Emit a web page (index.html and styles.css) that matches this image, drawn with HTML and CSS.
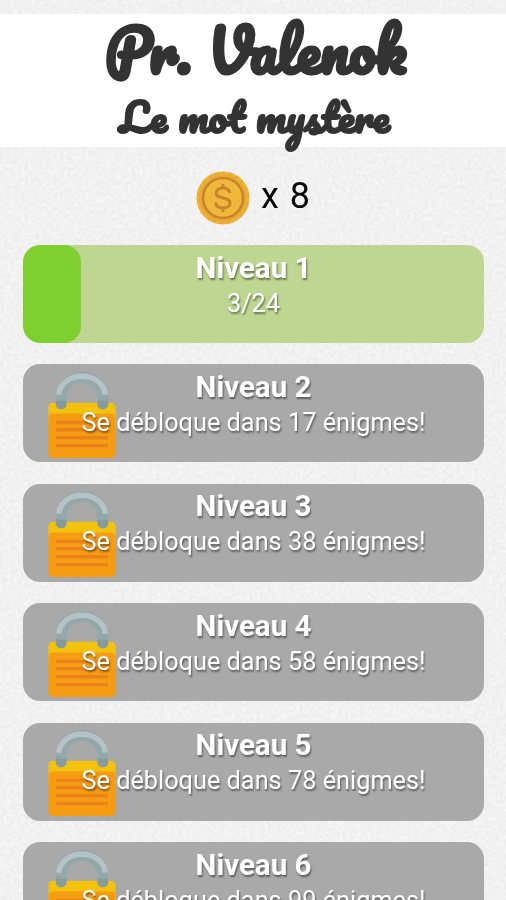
FILE: index.html
```html
<!DOCTYPE html>
<html lang="fr">
<head>
<meta charset="utf-8">
<meta name="viewport" content="width=device-width, initial-scale=1">
<title>Pr. Valenok</title>
<link rel="stylesheet" href="styles.css">
</head>
<body>
<svg class="paper" aria-hidden="true">
  <filter id="grain" x="0" y="0" width="100%" height="100%" color-interpolation-filters="sRGB">
    <feTurbulence type="fractalNoise" baseFrequency=".28" numOctaves="3" seed="4"/>
    <feColorMatrix values=".07 0 0 0 .911  .07 0 0 0 .911  .07 0 0 0 .911  0 0 0 0 1"/>
  </filter>
  <rect width="100%" height="100%" filter="url(#grain)"/>
</svg>
<svg class="symbols" aria-hidden="true">
  <symbol id="lock" viewBox="0 0 68 87">
    <path d="M13 33V27C13 -2 55 -2 55 27V33" fill="none" stroke="#93a8a9" stroke-width="11"/>
    <path d="M10.500 23C13-2 55-2 57.500 23" fill="none" stroke="#b5c3c7" stroke-width="5.500"/>
    <path d="M5 31H63Q68 31 68 36V54H0V36Q0 31 5 31Z" fill="#f2c20c"/>
    <path d="M0 47Q0 42 5 42H63Q68 42 68 47V82Q68 87 63 87H5Q0 87 0 82Z" fill="#f59c12"/>
    <path d="M7.500 29V33A5.500 5 0 0 0 18.500 33V29ZM49.500 29V33A5.500 5 0 0 0 60.500 33V29Z" fill="#879b9c"/>
    <path d="M8 51H60M8 58.500H60M8 66.500H60M8 74.500H60" stroke="#e98219" stroke-width="3.500"/>
  </symbol>
</svg>
<main class="screen">
  <header class="banner">
    <svg class="logo" viewBox="0 0 506 133" role="img" aria-label="Pr. Valenok, Le mot mystère">
      <text class="logo-title" x="105" y="59.500" textLength="301" lengthAdjust="spacingAndGlyphs">Pr. Valenok</text>
      <text class="logo-subtitle" x="119.500" y="118.500" textLength="270" lengthAdjust="spacingAndGlyphs">Le mot mystère</text>
    </svg>
  </header>
  <div class="coins">
    <svg class="coin" viewBox="0 0 54 54">
      <circle cx="27" cy="27" r="26.500" fill="#e8ab32"/>
      <circle cx="27" cy="27" r="25" fill="none" stroke="#f0b63a" stroke-width="2" stroke-dasharray="4 3"/>
      <circle cx="27" cy="27" r="20" fill="#efb83c" stroke="#c9842a" stroke-width="2.500"/>
      <path d="M34 22C33 18 30 17 27 17C23 17 20 19 20 22C20 29 34 25 34 32C34 35 31 37 27 37C23 37 20 35 19.500 31.500M27 13V17M27 37V41" fill="none" stroke="#c9842a" stroke-width="3"/>
    </svg>
    <span class="coin-count">x 8</span>
  </div>
  <section class="levels">
    <article class="level open"><div class="progress"></div><h2>Niveau 1</h2><p>3/24</p></article>
    <article class="level"><svg class="lock"><use href="#lock"/></svg><h2>Niveau 2</h2><p>Se débloque dans 17 énigmes!</p></article>
    <article class="level"><svg class="lock"><use href="#lock"/></svg><h2>Niveau 3</h2><p>Se débloque dans 38 énigmes!</p></article>
    <article class="level"><svg class="lock"><use href="#lock"/></svg><h2>Niveau 4</h2><p>Se débloque dans 58 énigmes!</p></article>
    <article class="level"><svg class="lock"><use href="#lock"/></svg><h2>Niveau 5</h2><p>Se débloque dans 78 énigmes!</p></article>
    <article class="level"><svg class="lock"><use href="#lock"/></svg><h2>Niveau 6</h2><p>Se débloque dans 99 énigmes!</p></article>
  </section>
</main>
</body>
</html>
```
FILE: styles.css
```css
* { box-sizing: border-box; }
body {
  margin: 0;
  background: #f1f1f1;
  font-family: Roboto, "Liberation Sans", sans-serif;
}
.paper {
  position: fixed;
  inset: 0;
  width: 100%;
  height: 100%;
  z-index: -1;
}
.symbols { position: absolute; width: 0; height: 0; }
.screen {
  height: 900px;
  padding-top: 14px;
  overflow: hidden;
}
.banner { height: 133px; background: #fff; }
.logo { display: block; width: 506px; height: 133px; overflow: visible; }
.logo text {
  font-family: Pacifico, Lato, sans-serif;
  font-weight: 400;
  fill: #333;
  stroke: #333;
  stroke-linejoin: round;
}
.logo-title { font-size: 58px; stroke-width: 3px; }
.logo-subtitle { font-size: 38.500px; stroke-width: 2px; }
.coins {
  display: flex;
  align-items: center;
  justify-content: center;
  gap: 11px;
  height: 98px;
  padding: 4px 0 0 1px;
}
.coin { width: 54px; height: 54px; }
.coin-count {
  font-size: 36px;
  line-height: 40px;
  letter-spacing: 1px;
  color: #080808;
  margin-top: -4px;
}
.levels {
  display: flex;
  flex-direction: column;
  gap: 21.450px;
  padding: 0 22px 0 23px;
}
.level {
  position: relative;
  flex: none;
  height: 98px;
  padding-top: 4.600px;
  border-radius: 17px;
  background: #a9a9a9;
  color: #fff;
  text-align: center;
  text-shadow: 1px 2px 2px rgba(0, 0, 0, .45);
  overflow: hidden;
}
.level.open { background: #bed692; }
.progress {
  position: absolute;
  inset: 0 auto 0 0;
  width: 12.500%;
  border-radius: 17px;
  background: #80cf30;
}
.lock {
  position: absolute;
  left: 25px;
  top: 7.500px;
  width: 68px;
  height: 86px;
}
.level h2, .level p { position: relative; margin: 0; }
.level h2 { font-size: 29.500px; font-weight: 700; line-height: 37px; }
.level p { font-size: 25.300px; line-height: 33px; }
```
